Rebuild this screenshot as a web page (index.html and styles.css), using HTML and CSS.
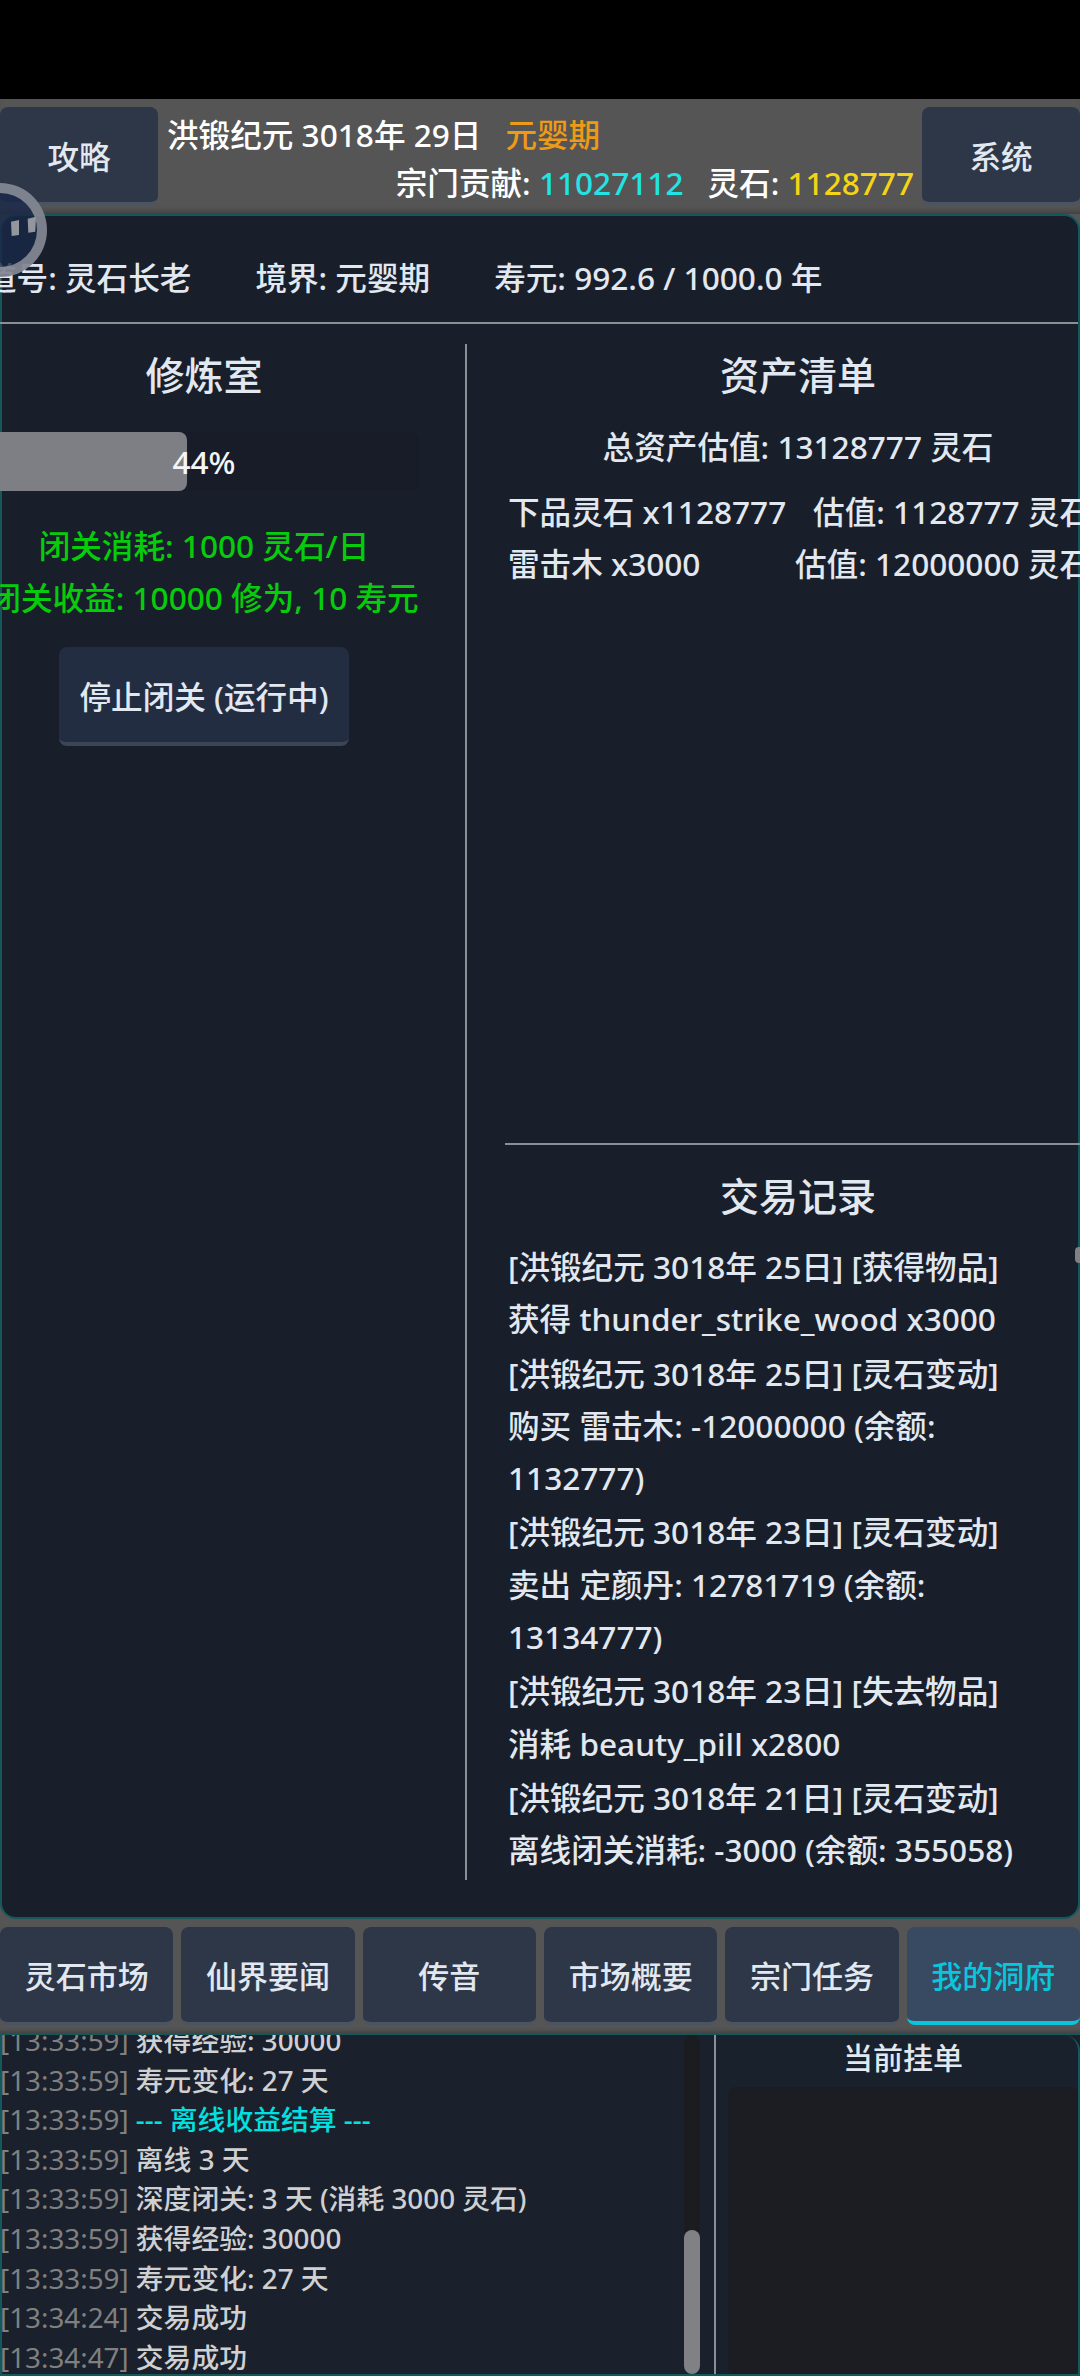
FILE: index.html
```html
<!DOCTYPE html>
<html lang="zh-CN">
<head>
  <meta charset="UTF-8">
  <title>洪锻纪元</title>
  <link rel="stylesheet" href="styles.css">
</head>
<body>
  <div class="notch"></div>

  <header class="topbar">
    <button class="top-btn">攻略</button>
    <div class="top-info">
      <div class="top-line">洪锻纪元 3018年 29日<span class="realm">元婴期</span></div>
      <div class="top-line right">宗门贡献: <span class="cyan">11027112</span><span class="stones">灵石: <span class="gold">1128777</span></span></div>
    </div>
    <button class="top-btn">系统</button>
  </header>

  <main class="panel">
    <div class="stats">
      <span>道号: 灵石长老</span>
      <span>境界: 元婴期</span>
      <span>寿元: 992.6 / 1000.0 年</span>
    </div>
    <div class="cols">
      <section class="room">
        <h3 class="title">修炼室</h3>
        <div class="bar">
          <div class="bar-fill" style="width: 46%"></div>
          <span class="bar-text">44%</span>
        </div>
        <p class="green first">闭关消耗: 1000 灵石/日</p>
        <p class="green">闭关收益: 10000 修为, 10 寿元</p>
        <button class="stop-btn">停止闭关 (运行中)</button>
      </section>
      <section class="side">
        <div class="assets">
          <h3 class="title">资产清单</h3>
          <p class="total">总资产估值: 13128777 灵石</p>
          <div class="asset"><span>下品灵石 x1128777</span><span>估值: 1128777 灵石</span></div>
          <div class="asset"><span>雷击木 x3000</span><span>估值: 12000000 灵石</span></div>
        </div>
        <div class="records">
          <h3 class="title">交易记录</h3>
          <p class="record">[洪锻纪元 3018年 25日] [获得物品]<br>获得 thunder_strike_wood x3000</p>
          <p class="record">[洪锻纪元 3018年 25日] [灵石变动]<br>购买 雷击木: -12000000 (余额: 1132777)</p>
          <p class="record">[洪锻纪元 3018年 23日] [灵石变动]<br>卖出 定颜丹: 12781719 (余额: 13134777)</p>
          <p class="record">[洪锻纪元 3018年 23日] [失去物品]<br>消耗 beauty_pill x2800</p>
          <p class="record">[洪锻纪元 3018年 21日] [灵石变动]<br>离线闭关消耗: -3000 (余额: 355058)</p>
        </div>
      </section>
    </div>
    <div class="edge-nub"></div>
  </main>

  <nav class="tabs">
    <button class="tab">灵石市场</button>
    <button class="tab">仙界要闻</button>
    <button class="tab">传音</button>
    <button class="tab">市场概要</button>
    <button class="tab">宗门任务</button>
    <button class="tab active">我的洞府</button>
  </nav>

  <div class="bottom">
    <div class="log">
      <div class="log-lines">
        <div class="log-line"><span class="time">[13:33:59]</span> 获得经验: 30000</div>
        <div class="log-line"><span class="time">[13:33:59]</span> 寿元变化: 27 天</div>
        <div class="log-line"><span class="time">[13:33:59]</span> <span class="notice">--- 离线收益结算 ---</span></div>
        <div class="log-line"><span class="time">[13:33:59]</span> 离线 3 天</div>
        <div class="log-line"><span class="time">[13:33:59]</span> 深度闭关: 3 天 (消耗 3000 灵石)</div>
        <div class="log-line"><span class="time">[13:33:59]</span> 获得经验: 30000</div>
        <div class="log-line"><span class="time">[13:33:59]</span> 寿元变化: 27 天</div>
        <div class="log-line"><span class="time">[13:34:24]</span> 交易成功</div>
        <div class="log-line"><span class="time">[13:34:47]</span> 交易成功</div>
      </div>
      <div class="scroll-track"><div class="scroll-thumb"></div></div>
    </div>
    <div class="orders">
      <h4 class="orders-title">当前挂单</h4>
      <div class="orders-box"></div>
    </div>
  </div>

  <!-- floating pause button sits over the top left corner -->
  <div class="float-btn">
    <svg width="25" height="21" viewBox="0 0 25 21">
      <path d="M0 5.7 L8 4 V19 L0.7 20 Z" fill="#92969d"/>
      <path d="M16.7 2.7 L25 0.7 L24.3 15.7 L17.3 16.7 Z" fill="#92969d"/>
    </svg>
  </div>
</body>
</html>
```

FILE: styles.css
```css
* {
  box-sizing: border-box;
}
html, body {
  margin: 0;
  padding: 0;
}
body {
  position: relative;
  width: 1080px;
  height: 2376px;
  overflow: hidden;
  display: flex;
  flex-direction: column;
  background: #555;
  color: #e2e8f0;
  font-family: "Noto Sans", "Noto Sans CJK SC", sans-serif;
  font-size: 31.6px;
  font-weight: 500;
}
button {
  font-family: inherit;
  font-size: 31.6px;
  font-weight: 500;
  border: none;
  cursor: pointer;
}
p, h3, h4 {
  margin: 0;
}
.notch {
  height: 99px;
  background: #000;
  flex: none;
}

/* top bar */
.topbar {
  height: 115px;
  flex: none;
  display: flex;
  padding-top: 8px;
  background: #555;
  box-shadow: inset 0 -6px 6px -4px rgba(0,0,0,0.3);
}
.top-btn {
  width: 158px;
  height: 98px;
  flex: none;
  background: #2d3748;
  color: #e2e8f0;
  border-radius: 8px;
  border-bottom: 3px solid #4a5463;
}
.top-info {
  flex: 1;
  padding: 4px 8px 0 9px;
  color: #fff;
}
.top-line {
  height: 48px;
  line-height: 48px;
  white-space: nowrap;
}
.top-line.right {
  text-align: right;
}
.realm {
  color: #ed9a17;
  margin-left: 24px;
}
.cyan {
  color: #22e4e4;
}
.stones {
  margin-left: 24px;
}
.gold {
  color: #f5d415;
}

/* main panel */
.panel {
  height: 1705px;
  flex: none;
  background: #191e2b;
  border: 2px solid #14585c;
  border-radius: 16px;
  display: flex;
  flex-direction: column;
}
.stats {
  height: 108px;
  flex: none;
  display: flex;
  align-items: center;
  gap: 64px;
  margin-left: -17px;
  padding-top: 14px;
  border-bottom: 2px solid #8b8e95;
  white-space: nowrap;
}
.cols {
  flex: 1;
  display: flex;
  padding: 20px 0 37px 0;
}
.title {
  font-size: 39px;
  font-weight: 500;
  line-height: 52px;
  text-align: center;
  color: #e2e8f0;
  margin-top: 5px;
}
.room {
  width: 465px;
  flex: none;
  display: flex;
  flex-direction: column;
  align-items: center;
  padding-right: 59px;
  border-right: 2px solid #8b8e95;
}
.bar {
  position: relative;
  width: 430px;
  height: 59px;
  flex: none;
  margin-top: 31px;
  background: #181c28;
  border-radius: 8px;
  overflow: hidden;
}
.bar-fill {
  height: 100%;
  background: #7e7f84;
  border-radius: 8px;
}
.bar-text {
  position: absolute;
  inset: 0;
  text-align: center;
  line-height: 59px;
  color: #f5f5f5;
}
.green {
  color: #06cc0c;
  line-height: 52px;
  white-space: nowrap;
  flex: none;
}
.green.first {
  margin-top: 29px;
}
.stop-btn {
  width: 290px;
  height: 99px;
  flex: none;
  margin-top: 23px;
  background: #232d42;
  color: #e2e8f0;
  border-radius: 8px;
  border-bottom: 4px solid #3a4558;
}
.side {
  flex: 1;
  min-width: 0;
  display: flex;
  flex-direction: column;
  padding-left: 38px;
  width: 624px;
}
.assets, .records {
  width: 586px;
}
.assets {
  height: 801px;
  flex: none;
  border-bottom: 2px solid #8b8e95;
}
.total {
  text-align: center;
  line-height: 52px;
  margin-top: 20px;
}
.asset {
  display: flex;
  justify-content: space-between;
  padding: 0 0 0 3px;
  line-height: 52px;
  white-space: nowrap;
}
.total + .asset {
  margin-top: 13px;
}
.records {
  padding-top: 20px;
}
.records .title {
  margin-bottom: 19px;
}
.record {
  width: 545px;
  padding: 0 3px;
  line-height: 52.3px;
  margin-bottom: 2px;
}
.edge-nub {
  position: absolute;
  left: 1075px;
  top: 1247px;
  width: 8px;
  height: 16px;
  border-radius: 4px;
  background: #808185;
}

/* tabs */
.tabs {
  height: 114px;
  flex: none;
  display: flex;
  gap: 8px;
  padding-top: 8px;
  background: #555;
  box-shadow: inset 0 -5px 5px -4px rgba(0,0,0,0.3);
}
.tab {
  flex: 1;
  height: 98px;
  background: #2d3748;
  color: #e2e8f0;
  border-radius: 8px;
  border-bottom: 3px solid #4a5463;
  padding: 0;
  font-size: 31px;
}
.tab.active {
  background: #374a62;
  color: #0bc5dc;
  border-bottom: 4px solid #0bc5dc;
}

/* bottom log and orders */
.bottom {
  flex: 1;
  min-height: 0;
  display: flex;
  background: #1a202c;
  border-top: 2px solid #14585c;
  border-bottom: 2px solid #14585c;
  border-left: 2px solid #14585c;
  overflow: hidden;
}
.log {
  width: 714px;
  flex: none;
  display: flex;
  border-right: 2px solid #8b8e95;
}
.log-lines {
  flex: 1;
  min-width: 0;
  margin: -14px 0 0 -2px;
  font-size: 27.8px;
  color: #cfd0d2;
  white-space: nowrap;
}
.log-line {
  height: 39.6px;
  line-height: 39.6px;
}
.time {
  color: #808080;
  font-weight: 400;
}
.notice {
  color: #00e0e0;
}
.scroll-track {
  width: 16px;
  flex: none;
  margin-right: 14px;
  display: flex;
  flex-direction: column;
  justify-content: flex-end;
  background: #1b1c20;
  border-radius: 8px;
}
.scroll-thumb {
  height: 144px;
  background: #808185;
  border-radius: 8px;
}
.orders {
  flex: 1;
  min-width: 0;
  display: flex;
  flex-direction: column;
  padding: 0 0 0 12px;
  background: #18212c;
  border-right: 2px solid #14585c;
  border-top-right-radius: 16px;
}
.orders-title {
  height: 52px;
  line-height: 46px;
  font-size: 30px;
  font-weight: 500;
  text-align: center;
  color: #e2e8f0;
  flex: none;
}
.orders-box {
  flex: 1;
  background: #1b1d22;
  border-radius: 8px;
}

/* floating button */
.float-btn {
  position: absolute;
  left: -47px;
  top: 183px;
  width: 94px;
  height: 94px;
  border-radius: 50%;
  background: rgba(26,40,72,0.82);
  border: 10px solid rgba(165,168,172,0.7);
}
.float-btn svg {
  position: absolute;
  left: 48px;
  top: 23px;
}
```
